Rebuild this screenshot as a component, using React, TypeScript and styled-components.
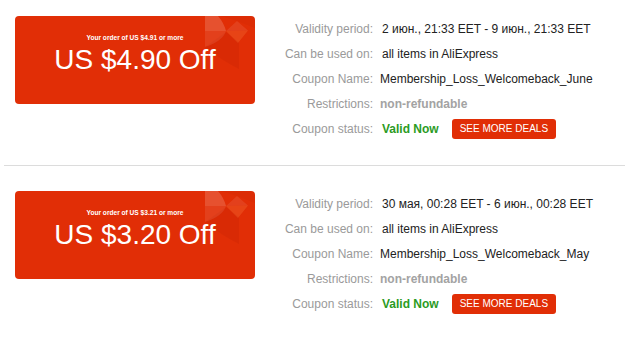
import React from "react";
import styled, { createGlobalStyle } from "styled-components";

const Global = createGlobalStyle`
  html, body { margin: 0; padding: 0; background: #fff; }
  body { font-family: "Liberation Sans", Arial, sans-serif; }
`;

const Page = styled.div`
  width: 625px;
  display: flex;
  flex-direction: column;
`;

const Section = styled.div<{ $first?: boolean }>`
  display: flex;
  align-items: flex-start;
  padding: ${(p) => (p.$first ? "16px" : "25px")} 0 24px 15px;
`;

const Divider = styled.div`
  height: 1px;
  margin-left: 4px;
  background: #dcdcdc;
`;

const Coupon = styled.div`
  position: relative;
  width: 240px;
  height: 88px;
  border-radius: 4px;
  background: #e12e06;
  color: #fff;
  display: flex;
  flex-direction: column;
  align-items: center;
  overflow: hidden;
`;

const Deco = styled.svg`
  position: absolute;
  top: 0;
  left: 0;
  width: 240px;
  height: 88px;
  pointer-events: none;
`;

const Condition = styled.div`
  position: relative;
  margin-top: 18px;
  font-size: 6.6px;
  font-weight: bold;
  line-height: 8px;
`;

const Amount = styled.div`
  position: relative;
  margin-top: 2px;
  font-size: 28px;
  line-height: 32px;
`;

const Details = styled.div`
  display: grid;
  grid-template-columns: 118px auto;
  grid-auto-rows: 25px;
  column-gap: 7px;
  align-items: center;
  font-size: 12px;
`;

const Label = styled.div`
  text-align: right;
  color: #9a9a9a;
`;

const Value = styled.div<{ $tone?: "muted" | "ok"; $indent?: number }>`
  display: flex;
  align-items: center;
  padding-left: ${(p) => p.$indent ?? 0}px;
  color: ${(p) => (p.$tone === "muted" ? "#a3a3a3" : p.$tone === "ok" ? "#2b9b1f" : "#222")};
  font-weight: ${(p) => (p.$tone ? "bold" : "normal")};
  white-space: nowrap;
`;

const DealsButton = styled.button`
  margin-left: 13px;
  height: 20px;
  padding: 0 8px;
  border: none;
  border-radius: 3px;
  background: #e12e06;
  color: #fff;
  font-family: "Liberation Sans", Arial, sans-serif;
  font-size: 10px;
  line-height: 20px;
  cursor: pointer;
`;

type CouponData = {
  min: string;
  off: string;
  period: string;
  name: string;
};

const coupons: CouponData[] = [
  {
    min: "US $4.91",
    off: "US $4.90",
    period: "2 июн., 21:33 EET - 9 июн., 21:33 EET",
    name: "Membership_Loss_Welcomeback_June",
  },
  {
    min: "US $3.21",
    off: "US $3.20",
    period: "30 мая, 00:28 EET - 6 июн., 00:28 EET",
    name: "Membership_Loss_Welcomeback_May",
  },
];

const Decoration = () => (
  <Deco viewBox="0 0 240 88">
    {/* darker lower band */}
    <path d="M190 31 L211 16 L224 26 L224 53 Q206 44 190 31 Z" fill="rgba(110,0,0,0.07)" />
    {/* rounded lighter shape, top half */}
    <path d="M190 0 L203 0 Q209 7 211 15 L190 15 Z" fill="rgba(255,255,255,0.17)" />
    {/* rounded lighter shape, bottom half */}
    <path d="M190 15 L211 15 Q208 25 190 31 Z" fill="rgba(255,255,255,0.09)" />
    {/* diamond upper half */}
    <path d="M222 5 L233 14.5 L211 15 Z" fill="rgba(255,255,255,0.09)" />
    {/* diamond lower triangle */}
    <path d="M211 15 L233 14.5 L223 27 Z" fill="rgba(255,150,80,0.22)" />
    {/* faint top-right shade */}
    <path d="M206 0 L240 0 L240 12 L222 5 Z" fill="rgba(90,0,0,0.04)" />
  </Deco>
);

const CouponRow = ({ c, first }: { c: CouponData; first?: boolean }) => (
  <Section $first={first}>
    <Coupon>
      <Decoration />
      <Condition>Your order of {c.min} or more</Condition>
      <Amount>{c.off} Off</Amount>
    </Coupon>
    <Details>
      <Label>Validity period:</Label>
      <Value $indent={2}>{c.period}</Value>
      <Label>Can be used on:</Label>
      <Value $indent={2}>all items in AliExpress</Value>
      <Label>Coupon Name:</Label>
      <Value>{c.name}</Value>
      <Label>Restrictions:</Label>
      <Value $tone="muted">non-refundable</Value>
      <Label>Coupon status:</Label>
      <Value $indent={2}>
        <Value as="span" $tone="ok">Valid Now</Value>
        <DealsButton>SEE MORE DEALS</DealsButton>
      </Value>
    </Details>
  </Section>
);

export default function App() {
  return (
    <Page>
      <Global />
      <CouponRow c={coupons[0]} first />
      <Divider />
      <CouponRow c={coupons[1]} />
    </Page>
  );
}
